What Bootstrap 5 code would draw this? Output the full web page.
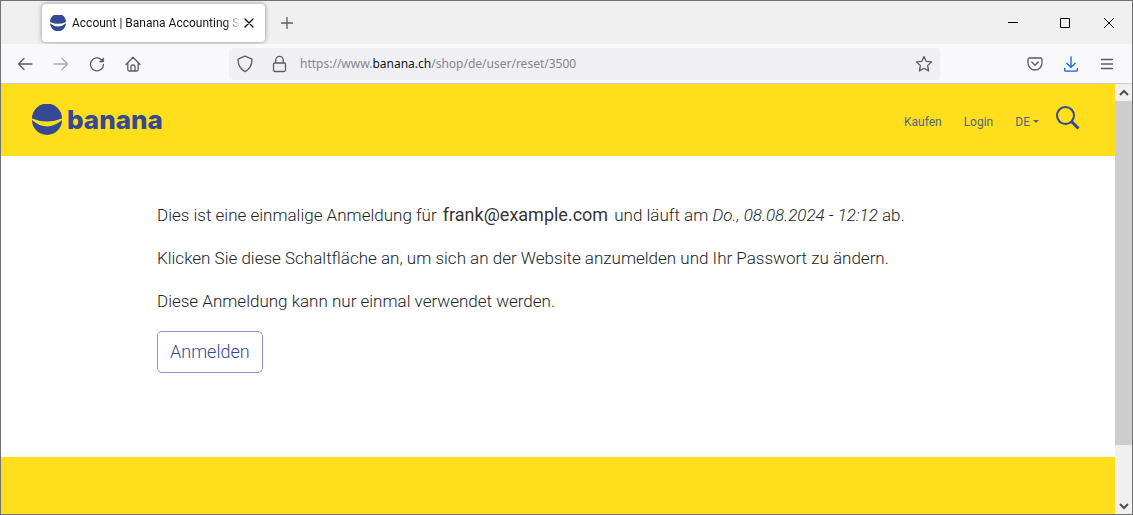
<!DOCTYPE html>
<html lang="de">
<head>
<meta charset="utf-8">
<meta name="viewport" content="width=device-width, initial-scale=1">
<title>Account | Banana Accounting Software</title>
<link href="https://cdn.jsdelivr.net/npm/bootstrap@5.3.0/dist/css/bootstrap.min.css" rel="stylesheet">
<style>
  :root { --brand: #344893; --sun: #ffdf1b; --chrome-icon: #5b5b66; }
  body { font-family: Roboto, "Liberation Sans", sans-serif; font-weight: 300; color: #212529; }
  svg { display: block; flex: none; }
  .ico { fill: none; stroke: currentColor; stroke-width: 1.3; stroke-linecap: round; stroke-linejoin: round; }
  .chrome-btn { border: 0; padding: 0; background: none; color: var(--chrome-icon); }
  .window { border: 1px solid #727272; background: #fff; }
  .tab-strip { background: #f0f0f0; height: 43px; padding: 0 17px 0 41px; font: 400 12px/18px Roboto, sans-serif; color: #15141a; }
  .tab-item { width: 223px; height: 38px; padding: 0 8px; background: #fff; border-radius: 4px; box-shadow: 0 0 4px rgba(90, 90, 110, .7); }
  .tab-title { margin-left: 6px; -webkit-mask-image: linear-gradient(to left, transparent, #000 16px); mask-image: linear-gradient(to left, transparent, #000 16px); }
  .tool-row { background: #f9f9fb; height: 40px; padding: 0 17px 0 16px; border-bottom: 1px solid #ccccd2; }
  .nav-tools { width: 212px; gap: 20px; }
  .address { height: 32px; border-radius: 4px; background: #f0f0f4; padding: 0 7px; margin-right: 87px; font: 400 12px/20px "Noto Sans", "Open Sans", sans-serif; color: #85858c; }
  .address b { font-weight: 400; color: #15141a; }
  .side-tools { gap: 20px; }
  .site-head { background: var(--sun); height: 72px; padding: 0 34px 0 30px; }
  .logo-text { font: 800 26px/32px Inter, Lato, sans-serif; color: var(--brand); }
  .site-nav { gap: 22px; }
  .site-nav a, .site-nav button { font-size: 12px; line-height: 18px; font-weight: 400; color: #56618a; text-decoration: none; }
  .site-main { padding: 45px 156px 79px; font-size: 17px; line-height: 27px; }
  .mail { font-size: 18px; font-weight: 400; color: #333; margin: 0 2px; }
  .btn-login { --bs-btn-color: var(--brand); --bs-btn-border-color: #8d98c6; --bs-btn-hover-bg: var(--brand); --bs-btn-hover-color: #fff; --bs-btn-font-size: 18px; --bs-btn-font-weight: 300; --bs-btn-padding-x: 12px; --bs-btn-padding-y: 6px; --bs-btn-border-radius: 5px; line-height: 28px; }
  .site-foot { background: var(--sun); border-top: 5px solid #fafafa; }
  .scroller { width: 17px; background: #f0f0f0; }
  .scroller button { height: 17px; color: #505050; }
  .thumb { background: #cdcdcd; flex: 343; }
  .track { flex: 52; }
</style>
</head>
<body>
<div class="window d-flex flex-column min-vh-100">
  <div class="tab-strip d-flex align-items-center">
    <div class="tab-item d-flex align-items-center">
      <svg width="16" height="16" viewBox="0 0 30 30" fill="#344893"><path d="M0 13A15 15 0 0 1 30 13Q15 20 0 13Z"/><path d="M0 15.500Q15 28 30 15.500A15 15 0 0 1 0 15.500Z"/></svg>
      <span class="tab-title flex-grow-1 text-nowrap overflow-hidden">Account | Banana Accounting Software</span>
      <button class="chrome-btn text-black" aria-label="Tab schließen"><svg class="ico" width="16" height="16" viewBox="0 0 16 16"><path d="M4 4l8 8M12 4l-8 8"/></svg></button>
    </div>
    <button class="chrome-btn ms-3" aria-label="Neuer Tab"><svg class="ico" width="12" height="12" viewBox="0 0 12 12"><path d="M6 .500v11M.500 6h11"/></svg></button>
    <div class="d-flex ms-auto gap-4">
      <button class="chrome-btn text-black px-2" aria-label="Minimieren"><svg width="12" height="12" viewBox="0 0 12 12"><path d="M1 5h10v1H1z"/></svg></button>
      <button class="chrome-btn text-black px-2" aria-label="Maximieren"><svg width="12" height="12" viewBox="0 0 12 12" fill="none" stroke="#000"><path d="M1.500 1.500h9v9h-9z"/></svg></button>
      <button class="chrome-btn text-black" aria-label="Schließen"><svg width="12" height="12" viewBox="0 0 12 12" fill="none" stroke="#000"><path d="M1 1l10 10M11 1L1 11"/></svg></button>
    </div>
  </div>
  <div class="tool-row d-flex align-items-center">
    <div class="nav-tools d-flex">
      <button class="chrome-btn" aria-label="Zurück"><svg class="ico" width="16" height="16" viewBox="0 0 16 16"><path d="M15 8H1.500M7 2.500L1.500 8L7 13.500"/></svg></button>
      <button class="chrome-btn opacity-50" aria-label="Vor" disabled><svg class="ico" width="16" height="16" viewBox="0 0 16 16"><path d="M1 8h13.500M9 2.500L14.500 8L9 13.500"/></svg></button>
      <button class="chrome-btn" aria-label="Neu laden"><svg class="ico" width="16" height="16" viewBox="0 0 16 16"><path d="M12.500 3.700A6.500 6.500 0 1 0 14.500 8.500"/><path d="M14.600 2v4H10.600z" fill="currentColor" stroke-width=".600"/></svg></button>
      <button class="chrome-btn" aria-label="Startseite"><svg class="ico" width="16" height="16" viewBox="0 0 16 16"><path d="M1 8.500L8 1.200L15 8.500M2.800 7v6.500q0 1.500 1.500 1.500h7.400q1.500 0 1.500-1.500V7M6 15v-4.500q0-1.500 2-1.500t2 1.500V15"/></svg></button>
    </div>
    <div class="address d-flex align-items-center flex-grow-1">
      <svg class="ico me-3" width="18" height="18" viewBox="0 0 18 18" color="#5b5b66"><path d="M9 1.200L15.500 3.800Q16 4 16 4.600C16 10 14 14 9 16.600C4 14 2 10 2 4.600Q2 4 2.500 3.800Z"/></svg>
      <svg class="ico me-2" width="18" height="18" viewBox="0 0 18 18" color="#5b5b66"><path d="M4.500 8h10q1 0 1 1v6q0 1.500-1.500 1.500H5q-1.500 0-1.500-1.500V9q0-1 1-1zM5.800 8V5a3.700 3.700 0 0 1 7.400 0V8"/></svg>
      <span class="ms-1">https://www.<b>banana.ch</b>/shop/de/user/reset/3500</span>
      <button class="chrome-btn ms-auto" aria-label="Lesezeichen"><svg class="ico" width="18" height="18" viewBox="0 0 18 18"><path d="M9 1.500l2.200 4.800 5.300.6-3.900 3.700 1 5.300L9 13.300l-4.600 2.600 1-5.300L1.500 6.900l5.300-.6z"/></svg></button>
    </div>
    <div class="side-tools d-flex">
      <button class="chrome-btn" aria-label="Pocket"><svg class="ico" width="16" height="16" viewBox="0 0 16 16"><path d="M2.500 2h11q1.500 0 1.500 1.500V7A7 7 0 0 1 1 7V3.500Q1 2 2.500 2zM4.800 6L8 9.200L11.200 6"/></svg></button>
      <button class="chrome-btn" aria-label="Downloads"><svg class="ico" width="16" height="16" viewBox="0 0 16 16" color="#0561e0"><path d="M8 .800v10.500M3.800 7.300L8 11.400l4.200-4.100M1.700 12.500V14q0 1.200 1.200 1.200h10.200q1.200 0 1.200-1.200v-1.500"/></svg></button>
      <button class="chrome-btn" aria-label="Menü"><svg class="ico" width="16" height="16" viewBox="0 0 16 16"><path d="M2.500 3.500h11M2.500 8h11M2.500 12.500h11"/></svg></button>
    </div>
  </div>
  <div class="d-flex flex-grow-1">
    <div class="flex-grow-1 d-flex flex-column">
      <header class="site-head d-flex align-items-center">
        <a href="#" class="d-flex align-items-center gap-1 text-decoration-none">
          <svg width="32" height="32" viewBox="-1 -1 32 32" fill="#344893"><path d="M0 13.500A15 15 0 0 1 30 13.500Q15 19.500 0 13.500Z"/><path d="M0 15Q15 28 30 15A15 15 0 0 1 0 15Z"/></svg>
          <span class="logo-text">banana</span>
        </a>
        <div class="d-flex align-items-center gap-3 ms-auto">
          <nav class="site-nav d-flex align-items-center pt-1">
            <a href="#">Kaufen</a>
            <a href="#">Login</a>
            <button class="chrome-btn dropdown-toggle" data-bs-toggle="dropdown">DE</button>
          </nav>
          <button class="chrome-btn pb-1" aria-label="Suche"><svg width="26" height="26" viewBox="0 0 26 26" fill="none" stroke="#344893"><circle cx="10.500" cy="10.500" r="8.500" stroke-width="2"/><path d="M16.500 16.500L23.500 23.500" stroke-width="3"/></svg></button>
        </div>
      </header>
      <main class="site-main">
        <p>Dies ist eine einmalige Anmeldung für <span class="mail">frank@example.com</span> und läuft am <em>Do., 08.08.2024 - 12:12</em> ab.</p>
        <p>Klicken Sie diese Schaltfläche an, um sich an der Website anzumelden und Ihr Passwort zu ändern.</p>
        <p>Diese Anmeldung kann nur einmal verwendet werden.</p>
        <button type="submit" class="btn btn-login">Anmelden</button>
      </main>
      <footer class="site-foot flex-grow-1"></footer>
    </div>
    <div class="scroller d-flex flex-column">
      <button class="chrome-btn d-flex justify-content-center align-items-center" aria-label="Nach oben"><svg width="10" height="8" viewBox="0 0 10 8" fill="none" stroke="currentColor" stroke-width="2"><path d="M1 6l4-4 4 4"/></svg></button>
      <div class="thumb"></div>
      <div class="track"></div>
      <button class="chrome-btn d-flex justify-content-center align-items-center" aria-label="Nach unten"><svg width="10" height="8" viewBox="0 0 10 8" fill="none" stroke="currentColor" stroke-width="2"><path d="M1 2l4 4 4-4"/></svg></button>
    </div>
  </div>
</div>
<script src="https://cdn.jsdelivr.net/npm/bootstrap@5.3.0/dist/js/bootstrap.bundle.min.js"></script>
</body>
</html>
